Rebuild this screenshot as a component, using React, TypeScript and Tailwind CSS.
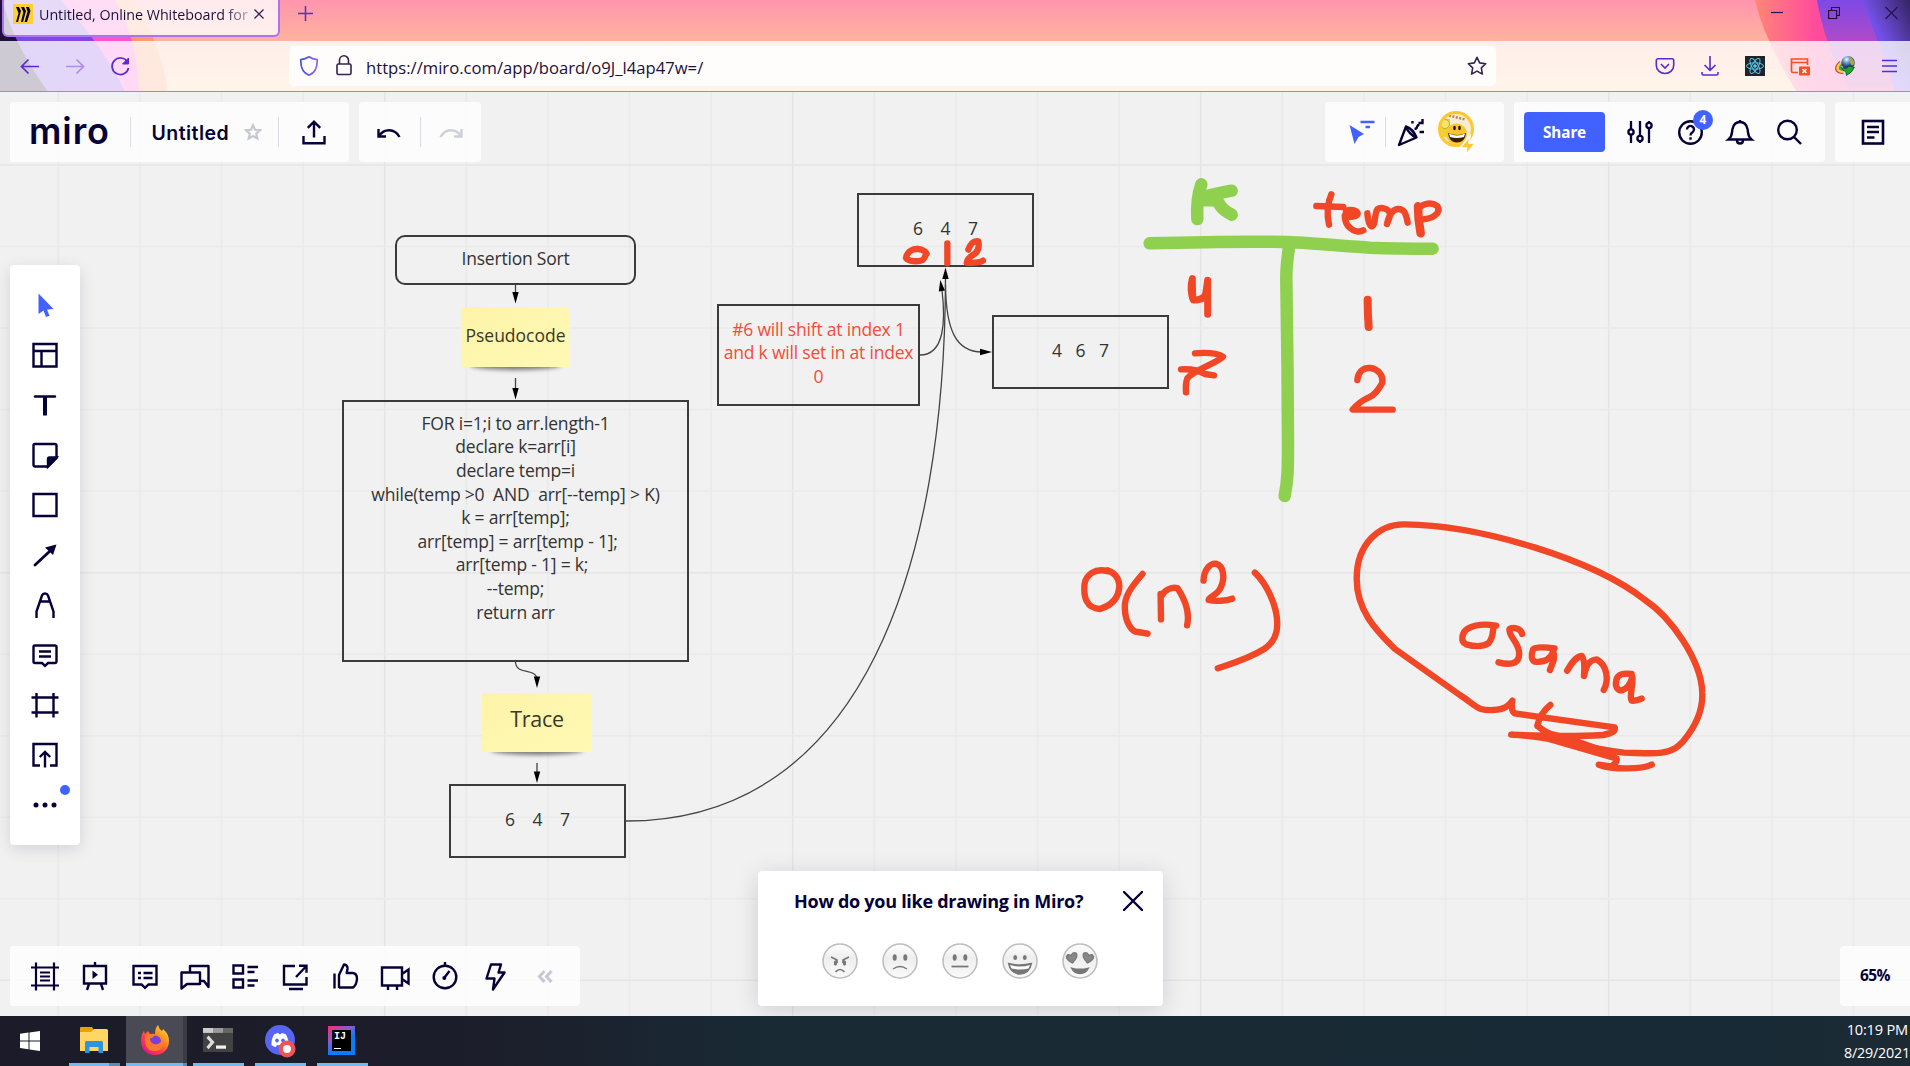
import type { ReactNode } from "react";

const NAVY = "#050038";
const RED = "#f24726";
const GREEN = "#8fd14f";

function Icon({ children, size = 30, color = NAVY, w = 2.4 }: { children: ReactNode; size?: number; color?: string; w?: number }) {
  return (
    <svg width={size} height={size} viewBox="0 0 30 30" fill="none" stroke={color} strokeWidth={w} className="block shrink-0 overflow-visible">
      {children}
    </svg>
  );
}

/* ---------- Browser chrome ---------- */

function ThemeArt() {
  return (
    <svg className="absolute inset-0" width="1910" height="92" viewBox="0 0 1910 92" preserveAspectRatio="none">
      <defs>
        <linearGradient id="sky" x1="0" y1="0" x2="0" y2="1">
          <stop offset="0" stopColor="#ff95ad" />
          <stop offset="0.45" stopColor="#ffb39f" />
          <stop offset="1" stopColor="#ffce9f" />
        </linearGradient>
        <linearGradient id="violet" x1="0" y1="0" x2="1" y2="0">
          <stop offset="0" stopColor="#7a4ae0" />
          <stop offset="1" stopColor="#8a45e4" />
        </linearGradient>
        <linearGradient id="magenta" x1="0" y1="0" x2="1" y2="0">
          <stop offset="0" stopColor="#ff8577" />
          <stop offset="0.4" stopColor="#ff4b9e" />
        </linearGradient>
        <linearGradient id="corner" x1="1" y1="0" x2="0" y2="1">
          <stop offset="0" stopColor="#33245f" />
          <stop offset="0.5" stopColor="#7350e8" />
          <stop offset="1" stopColor="#8650ff" />
        </linearGradient>
        <linearGradient id="purple" x1="0" y1="0" x2="0" y2="1">
          <stop offset="0" stopColor="#7d49e6" />
          <stop offset="0.45" stopColor="#b04ac8" />
          <stop offset="1" stopColor="#d84ba8" />
        </linearGradient>
      </defs>
      <rect width="1910" height="92" fill="url(#sky)" />
      <path d="M0 0H133Q160 40 168 92H0Z" fill="#ff9a6c" />
      <path d="M0 0H115Q138 40 139 92H0Z" fill="#ff53cf" />
      <path d="M0 0H60Q104 46 125 92H0Z" fill="url(#violet)" />
      <path d="M0 0H3Q10 38 48 92H0Z" fill="#1e1038" />
      <path d="M1755 0Q1764 40 1797 92H1910V0Z" fill="url(#magenta)" />
      <path d="M1817 0Q1824 44 1850 92H1910V0Z" fill="url(#purple)" />
      <path d="M1862 0Q1878 40 1896 92H1910V0Z" fill="url(#corner)" />
    </svg>
  );
}

function Browser() {
  return (
    <header className="relative h-[92px] shrink-0 overflow-hidden font-['Open_Sans',sans-serif]">
      <ThemeArt />
      <div className="relative flex h-[41px] items-start">
        <div className="ml-[2px] flex h-[37px] w-[278px] items-start rounded-b-[6px] border-2 border-t-0 border-[#b072f2] bg-white/80 pl-[9px] pt-[4px]">
          <svg width="20" height="20" viewBox="0 0 20 20" className="shrink-0">
            <rect width="20" height="20" fill="#ffd02f" />
            <path d="M3 3h3l2 4-3 11H3l2.500-9ZM8 3h3l2 4-3 11H8l2.300-10ZM13 3h3l1.500 4-3.500 11h-2.500l3-10.500Z" fill={NAVY} />
          </svg>
          <div className="ml-[6px] h-[22px] w-[212px] whitespace-nowrap bg-[linear-gradient(90deg,#1d1038_183px,#1d103840_212px)] bg-clip-text text-[14.3px] leading-[21px] tracking-[-0.04px] text-transparent">
            Untitled, Online Whiteboard for
          </div>
          <svg width="10" height="10" viewBox="0 0 10 10" className="ml-[3px] mt-[5px]" stroke="#33204d" strokeWidth="1.300">
            <path d="M0.500 0.500L9.500 9.500M9.500 0.500L0.500 9.500" />
          </svg>
        </div>
        <svg width="15" height="15" viewBox="0 0 15 15" className="ml-[18px] mt-[6px]" stroke="#5b2bcf" strokeWidth="1.500">
          <path d="M7.500 0V15M0 7.500H15" />
        </svg>
        <div className="ml-auto mr-[12px] mt-[6px] flex items-center gap-[45px]">
          <svg width="12" height="14" viewBox="0 0 12 14" stroke="#26124e" strokeWidth="1.200"><path d="M0 6.500H12" /></svg>
          <svg width="12" height="14" viewBox="0 0 12 14" fill="none" stroke="#1d0d3d" strokeWidth="1.200"><path d="M0.600 4.500h8v8h-8ZM3.500 4.500v-3h8v8h-3" /></svg>
          <svg width="13" height="14" viewBox="0 0 13 14" stroke="#26124e" strokeWidth="1.200"><path d="M0.500 1l12 12M12.500 1l-12 12" /></svg>
        </div>
      </div>
      <div className="relative flex h-[51px] items-center border-b border-[#b98c83] bg-white/[0.78] pb-px">
        <div className="ml-[15px] flex items-center gap-[15px]">
          <Icon color="#5b2bcf" w={1.700}><path d="M24 15.500H7M13.500 8.500L6.500 15.500l7 7" /></Icon>
          <Icon color="#b08ee8" w={1.700}><path d="M6 15.500h17M16.500 8.500l7 7-7 7" /></Icon>
          <Icon color="#5b2bcf" w={1.700}><path d="M22.500 11A8.300 8.300 0 1 0 23.500 17" /><path d="M23.500 7v6h-6Z" fill="#5b2bcf" strokeWidth="1" /></Icon>
        </div>
        <div className="ml-[154px] flex h-[40px] w-[1207px] items-center rounded-[5px] bg-white/85 pl-[10px]">
          <svg width="20" height="20" viewBox="0 0 20 20" fill="none">
            <defs><linearGradient id="sh"><stop stopColor="#3c54d8" /><stop offset="1" stopColor="#8f62e8" /></linearGradient></defs>
            <path d="M10 .8C7.500 2.500 4.800 3.300 1.800 3.700C1.500 11 4.500 17 10 19.200C15.500 17 18.500 11 18.200 3.700C15.200 3.300 12.500 2.500 10 .8Z" stroke="url(#sh)" strokeWidth="1.700" />
          </svg>
          <svg width="16" height="21" viewBox="0 0 16 21" fill="none" stroke="#33224c" strokeWidth="1.600" className="ml-[17px]">
            <rect x="1" y="9" width="14" height="10.500" rx="1.500" /><path d="M3.500 9V5.300a4.500 4.500 0 0 1 9 0V9" />
          </svg>
          <span className="ml-[14px] translate-y-[3px] whitespace-nowrap text-[16.65px] text-[#1d1038]">https://miro.com/app/board/o9J_l4ap47w=/</span>
          <svg width="22" height="22" viewBox="0 0 24 24" fill="none" stroke="#33224c" strokeWidth="1.700" strokeLinejoin="round" className="ml-auto mr-[8px]">
            <path d="M12 2.500l2.900 6.100 6.600.9-4.800 4.600 1.200 6.700L12 17.600l-5.900 3.200 1.200-6.700L2.500 9.500l6.600-.9Z" />
          </svg>
        </div>
        <div className="ml-auto mr-[8px] flex items-center gap-[21px]">
          <svg width="24" height="24" viewBox="0 0 24 24" fill="none" stroke="#5b2bcf" strokeWidth="1.600"><path d="M5 4.800h14a1.700 1.700 0 0 1 1.700 1.700v5a8.700 8 0 0 1-17.400 0v-5A1.700 1.700 0 0 1 5 4.800ZM8 10l4 4 4-4" /></svg>
          <svg width="24" height="24" viewBox="0 0 24 24" fill="none" stroke="#5b2bcf" strokeWidth="1.600"><path d="M12 2v14M6.500 11l5.500 5.300 5.500-5.300M4 18v1.500A1.500 1.500 0 0 0 5.500 21h13a1.500 1.500 0 0 0 1.500-1.500V18" /></svg>
          <svg width="24" height="24" viewBox="0 0 24 24" fill="none" stroke="#53c8ea" strokeWidth="1"><rect x="2" y="2" width="20" height="20" fill="#20232a" stroke="none" /><ellipse cx="12" cy="12" rx="8.500" ry="3.200" /><ellipse cx="12" cy="12" rx="8.500" ry="3.200" transform="rotate(60 12 12)" /><ellipse cx="12" cy="12" rx="8.500" ry="3.200" transform="rotate(120 12 12)" /><circle cx="12" cy="12" r="1.300" fill="#53c8ea" /></svg>
          <svg width="24" height="24" viewBox="0 0 24 24" fill="none" stroke="#fb4e1d" strokeWidth="1.700"><path d="M10 18.500H5a1.500 1.500 0 0 1-1.500-1.500V5H19.500v6M3.500 8.500H19.500" /><rect x="11" y="12.500" width="11" height="9" rx="1" fill="#fb4e1d" stroke="none" /><path d="M14.500 15l4 4M18.500 15l-4 4" stroke="#fff" strokeWidth="1.500" /></svg>
          <svg width="24" height="24" viewBox="0 0 24 24" fill="none">
            <defs><radialGradient id="gl" cx=".4" cy=".25"><stop stopColor="#f2f8fd" /><stop offset=".5" stopColor="#6d9ccc" /><stop offset="1" stopColor="#24457b" /></radialGradient></defs>
            <path d="M7 7.500Q1 12 3.500 17q3 3 7 2" stroke="#d8422c" strokeWidth="1.400" />
            <path d="M8 9Q3.500 12.500 5 16q2 2 6 1.500" stroke="#f6d13c" strokeWidth="2.400" />
            <path d="M9 10.500Q6 13 7 15q2 1.500 5 0" stroke="#3aa655" strokeWidth="1.800" />
            <circle cx="15" cy="8.800" r="6.800" fill="url(#gl)" />
            <path d="M17 3q4 2 4.500 6-1.500 4-3.500 1.500t-1-7.500Z" fill="#a9a548" />
            <path d="M8 13.500q4 2 7 0l-.5-1.500 7 1.200q-2 5-8 8.300l-.8-4q-3-.500-4.700-4Z" fill="#1ea52e" stroke="#0b3d18" strokeWidth=".7" />
          </svg>
          <svg width="24" height="24" viewBox="0 0 24 24" stroke="#5b2bcf" strokeWidth="1.600"><path d="M4 6.500h15M4 12h15M4 17.500h15" /></svg>
        </div>
      </div>
    </header>
  );
}

/* ---------- Board ---------- */

function Box({ x, y, w, h, rounded, children }: { x: number; y: number; w: number; h: number; rounded?: boolean; children: ReactNode }) {
  return (
    <div
      className={
        "absolute flex items-center justify-center whitespace-pre border-2 border-[#3b3b3b] text-center text-[17.5px] leading-[23.66px] tracking-[-0.2px] text-[#333] " +
        (rounded ? "rounded-[10px]" : "")
      }
      style={{ left: x, top: y, width: w, height: h }}
    >
      {children}
    </div>
  );
}

function Digits({ values, step }: { values: string[]; step: string }) {
  return (
    <div className="flex">
      {values.map((v) => (
        <span key={v} className={step}>{v}</span>
      ))}
    </div>
  );
}

function Sticky({ x, y, w, h, children }: { x: number; y: number; w: number; h: number; children: ReactNode }) {
  return (
    <div className="absolute" style={{ left: x, top: y, width: w, height: h }}>
      <div className="absolute inset-x-[10px] bottom-0 h-[8px] rounded-[50%] bg-black/10 shadow-[0_2px_4px_1px_rgba(0,0,0,0.5)]" />
      <div className="relative flex h-full items-center justify-center bg-linear-to-br from-[#fdf4a8] to-[#fff9b4] font-medium text-[#3a3827]">{children}</div>
    </div>
  );
}

function Grid() {
  const cols = Array.from({ length: 23 }, (_, i) => i);
  const rows = Array.from({ length: 11 }, (_, i) => i);
  return (
    <g strokeWidth="1.500">
      {cols.map((i) => (
        <path key={i} d={`M${58.3 + i * 81.6} 92V1016`} stroke={i % 5 === 4 ? "#e5e5e5" : "#eaeaea"} />
      ))}
      {rows.map((i) => (
        <path key={i} d={`M0 ${165 + i * 81.53}H1910`} stroke={i % 5 === 0 ? "#e5e5e5" : "#eaeaea"} />
      ))}
    </g>
  );
}

function Strokes({ paths, color, w }: { paths: string[]; color: string; w: number }) {
  return (
    <g stroke={color} strokeWidth={w} fill="none" strokeLinecap="round" strokeLinejoin="round">
      {paths.map((d) => (
        <path key={d} d={d} vectorEffect="non-scaling-stroke" />
      ))}
    </g>
  );
}

function Ink() {
  return (
    <g>
      <g transform="translate(700 180) scale(0.33333)">
        <Strokes color={RED} w={6.300} paths={[
          "M660 208C640 203 621 215 618 234C625 245 655 246 668 240C675 235 675 226 680 221C672 208 655 205 645 208",
          "M742 190V250",
          "M805 209C812 190 822 181 835 184C838 200 835 212 826 220C812 230 800 237 800 248C815 249 838 249 849 242",
        ]} />
      </g>
      <g transform="translate(1130 160) scale(0.33333)">
        <Strokes color={GREEN} w={12.500} paths={[
          "M59 250C200 246 380 244 470 246C560 250 640 258 720 263C800 266 860 266 908 266",
          "M477 262C472 300 468 320 469 360C471 500 474 700 474 850C474 920 474 960 464 1008",
          "M214 73C203 105 200 140 202 177",
          "M305 92C275 98 245 102 230 110L222 120C250 122 260 118 268 132C278 152 295 158 305 164",
        ]} />
        <Strokes color={RED} w={7} paths={[
          "M187 356C181 380 183 402 190 420C215 420 228 412 228 395L233 361M233 361V463",
          "M187 365L188 412",
        ]} />
        <Strokes color={RED} w={8} paths={["M713 419C713 450 714 475 716 501"]} />
        <Strokes color={RED} w={6.400} paths={[
          "M604 103C592 130 590 162 597 194",
          "M559 138L640 141",
          "M650 170C665 172 682 170 683 160C680 150 660 148 648 152L648 165L672 160C655 158 640 160 645 175C648 200 668 212 680 214C690 216 695 214 700 211",
          "M712 160C714 180 718 200 727 199C737 195 733 160 742 148C752 140 775 145 780 160C780 180 772 185 771 192C776 170 785 150 802 147C822 145 828 160 833 188",
          "M195 580C230 577 262 580 279 590C270 605 190 630 172 655C166 670 167 680 168 697",
          "M153 628C185 626 205 630 225 642L252 646",
          "M682 660C684 635 700 622 722 624C745 628 760 645 757 668C745 690 735 705 715 713C695 722 680 735 668 749L788 749",
        ]} />
        <Strokes color={RED} w={8.500} paths={["M864 139C864 170 866 190 872 220"]} />
        <Strokes color={RED} w={6.400} paths={["M866 145C880 130 905 125 922 138C936 160 905 177 878 178"]} />
      </g>
      <g transform="translate(1060 500) scale(0.42088 0.33333)">
        <Strokes color={RED} w={6.400} paths={[
          "M113 214C85 202 60 225 58 255C56 290 62 325 95 327C125 315 140 290 141 258C140 230 125 215 113 211",
          "M196 222C170 260 152 290 154 325C155 365 170 398 186 396L208 401",
          "M239 282L240 358M241 288C248 270 265 260 279 264C290 285 310 330 302 376",
          "M341 242C342 210 355 190 370 191C390 198 392 235 382 262C375 285 352 292 353 300C370 305 395 302 409 296",
          "M463 218C490 250 518 320 516 375C516 405 505 430 485 447C450 475 410 490 375 505",
          "M1036 377C1010 371 985 375 970 385C955 395 950 425 965 433C985 440 1005 440 1018 430C1030 412 1028 395 1030 380",
          "M1098 402C1095 385 1078 380 1068 387C1065 410 1090 425 1091 460C1092 495 1065 495 1042 487",
          "M1175 445C1150 441 1130 440 1124 448C1119 465 1120 480 1128 485C1150 488 1165 478 1172 455C1178 475 1170 490 1164 510",
          "M1205 512C1215 490 1225 470 1240 468C1248 480 1246 510 1245 528C1250 500 1255 480 1275 478C1300 495 1305 540 1292 570",
          "M1358 522C1340 520 1325 520 1322 540C1318 560 1325 572 1335 571C1350 565 1357 545 1360 530C1362 560 1352 590 1358 602C1365 603 1375 600 1382 596",
          "M1165 615C1150 630 1138 655 1134 678C1180 725 1260 745 1340 758C1380 759 1410 762 1430 758C1460 752 1470 738 1480 725C1510 680 1528 630 1526 578C1524 480 1450 350 1390 300C1270 180 1000 75 818 73C760 72 705 130 705 235C704 330 750 390 796 447L950 585C975 605 985 620 1000 627C1015 632 1045 632 1058 622C1065 616 1070 612 1075 602C1072 620 1072 632 1080 640L1318 682C1320 695 1310 700 1290 705C1220 710 1140 708 1072 704C1120 708 1150 712 1170 720L1322 775C1325 785 1315 797 1308 799L1280 794C1310 808 1380 810 1406 794",
          "M1160 700L1210 716L1300 757",
        ]} />
      </g>
    </g>
  );
}

function Connectors() {
  return (
    <g stroke="#444" strokeWidth="1.300" fill="none">
      <path d="M515.500 285v12M515.500 378v14M515.500 662C516 676 537 667 537 680M537 763v12" />
      <path d="M626 821C866 821 945 560 945.500 278" />
      <path d="M920 355C945 355 945.500 320 942 290" />
      <path d="M945.500 285C946 330 956 352 982 352" />
      <g fill="#000" stroke="none">
        <path d="M512.300 292h6.400l-3.200 11.500ZM512.300 388h6.400l-3.200 11.500ZM533.800 676.500h6.400l-3.200 11.500ZM533.800 771.500h6.400l-3.200 11.500Z" />
        <path d="M942.300 279h6.400l-3.200-11.500ZM938.800 291.500l6.200-1-4.700-10.500ZM980 348.800v6.400l12-3.200Z" />
      </g>
    </g>
  );
}

function Board() {
  return (
    <div className="absolute left-0 top-[-92px] h-[1108px] w-[1910px] font-['Open_Sans',sans-serif]">
      <svg className="absolute inset-0" width="1910" height="1108" viewBox="0 0 1910 1108">
        <Grid />
        <Connectors />
      </svg>
      <Box x={395} y={235} w={241} h={50} rounded><span className="-translate-y-px">Insertion Sort</span></Box>
      <Sticky x={461} y={307} w={109} h={60}>
        <span className="-translate-y-[2px] text-[17.5px]">Pseudocode</span>
      </Sticky>
      <Box x={342} y={400} w={347} h={262}>
        <div className="-mt-[26px]">
          {["FOR i=1;i to arr.length-1", "declare k=arr[i]", "declare temp=i", "while(temp >0  AND  arr[--temp] > K)", "k = arr[temp];", " arr[temp] = arr[temp - 1];", "   arr[temp - 1] = k;", "--temp;", "return arr"].map((l) => (
            <div key={l}>{l}</div>
          ))}
        </div>
      </Box>
      <Sticky x={482} y={693} w={110} h={59}>
        <span className="-translate-y-[3px] text-[21.5px] tracking-[-0.3px]">Trace</span>
      </Sticky>
      <Box x={449} y={784} w={177} h={74}><Digits values={["6", "4", "7"]} step="w-[27.500px] -translate-y-px" /></Box>
      <Box x={857} y={193} w={177} h={74}><Digits values={["6", "4", "7"]} step="w-[27.500px] -translate-y-px" /></Box>
      <Box x={717} y={304} w={203} h={102}>
        <div className="-mt-[4px] text-[#f24d3a]">{"#6 will shift at index 1\nand k will set in at index\n0"}</div>
      </Box>
      <Box x={992} y={315} w={177} h={74}><Digits values={["4", "6", "7"]} step="w-[23.500px] -translate-y-px" /></Box>
      <svg className="absolute inset-0" width="1910" height="1108" viewBox="0 0 1910 1108">
        <Ink />
      </svg>
    </div>
  );
}

/* ---------- Miro panels ---------- */

function Divider() {
  return <div className="h-[30px] w-px bg-[#dcdce2]" />;
}

function TopBar() {
  return (
    <div className="relative flex h-[60px] text-[#050038]">
      <div className="ml-[10px] flex w-[339px] items-center rounded bg-white/80">
        <span className="ml-[19px] w-[81px] -translate-y-px font-['Inter',sans-serif] text-[36px] font-semibold leading-none tracking-[0.9px]">miro</span>
        <div className="ml-[20px]"><Divider /></div>
        <span className="ml-[20.500px] w-[79.500px] translate-y-[1.500px] whitespace-nowrap font-['Inter',sans-serif] text-[19.5px] font-semibold tracking-[0.45px]">Untitled</span>
        <svg width="18" height="18" viewBox="0 0 24 24" fill="none" stroke="#c8c8d2" strokeWidth="3" className="ml-[13px]"><path d="M12 3l2.700 6 6.500.7-4.900 4.400 1.400 6.500L12 17.300l-5.700 3.300 1.400-6.500L2.800 9.700l6.500-.7Z" /></svg>
        <div className="ml-[16px]"><Divider /></div>
        <div className="ml-[20px]"><Icon><path d="M4.500 19v7.300h21V19M15 20.500V5M8.800 10.800L15 4.600l6.200 6.200" /></Icon></div>
      </div>
      <div className="ml-[10px] flex w-[122px] items-center rounded bg-white/80 pl-[15px]">
        <Icon><path d="M4.500 12v7.500H12M5 19C10 11.500 20.500 11 25.500 20" /></Icon>
        <div className="ml-[16px]"><Divider /></div>
        <div className="ml-[15px]"><Icon color="#cfcfd8"><path d="M25.500 12v7.500H18M25 19C20 11.500 9.500 11 4.500 20" /></Icon></div>
      </div>
      <div className="ml-auto flex w-[179px] items-center rounded bg-white/80 pl-[22px]">
        <Icon color="#4262ff"><path d="M2.500 8l5 19 4-7 5.500-3Z" fill="#4262ff" stroke="none" /><path d="M13.500 5h14M18.500 10h4.500" /></Icon>
        <div className="ml-[8px]"><Divider /></div>
        <div className="ml-[9px]">
          <Icon><path d="M4 28L11 9.500Q18 12 21.500 20.500L4 28ZM11 10Q14 17 21 20.500" strokeLinejoin="round" /><path d="M17.500 4v2.500M19.500 12c4 0 1-4 5-4.500M27.500 2v4h-4M24.500 15h4.500" /></Icon>
        </div>
        <div className="relative -mt-[6px] ml-[13px] size-[36px]">
          <svg width="44" height="46" viewBox="0 0 44 46" className="absolute left-0 top-0">
            <defs><clipPath id="av"><circle cx="18" cy="18" r="15" /></clipPath></defs>
            <circle cx="18" cy="18" r="16.500" fill="#f5ecd2" stroke="#ffc72c" strokeWidth="3" />
            <g clipPath="url(#av)">
              <path d="M0 8h12v18H0Z" fill="#e8d437" /><circle cx="7" cy="13" r="4.500" fill="#f4e66a" stroke="#c8a91c" />
              <path d="M11 4.500l16 4" stroke="#b9854c" strokeWidth="2.500" strokeDasharray="2 1.500" fill="none" />
              <circle cx="18.500" cy="23" r="10.500" fill="#fbc52d" />
              <path d="M10 22q9 4 18 0q-1 9.500-9 9.500T10 22Z" fill="#401d09" /><path d="M11 22.500q8 4 16 0l-1 3.500q-7 2-14 0Z" fill="#fff" />
              <ellipse cx="16.500" cy="17" rx="1.300" ry="2.300" fill="#1d1206" /><ellipse cx="21.500" cy="17" rx="1.300" ry="2.300" fill="#1d1206" />
            </g>
            <path d="M32 25l-10 12h6.500l-1 7 10-12h-6.500l1-7Z" fill="#ffc72c" stroke="#fff" strokeWidth="1.600" />
          </svg>
        </div>
      </div>
      <div className="ml-[10px] flex w-[311px] items-center rounded bg-white/80 pl-[10px]">
        <button className="h-[40px] w-[81px] rounded bg-[#4262ff] font-['Noto_Sans',sans-serif] text-[15.3px] font-bold text-white">Share</button>
        <div className="ml-[20px]">
          <Icon w={2.300}><path d="M6 4v8M6 18v8M15 4v14M15 25v1M24 4v1M24 12v14" /><circle cx="6" cy="15" r="2.600" /><circle cx="15" cy="21.500" r="2.600" /><circle cx="24" cy="8.500" r="2.600" /></Icon>
        </div>
        <div className="relative ml-[20px]">
          <Icon><circle cx="15.500" cy="15.500" r="11.300" /><path d="M12 12.500a3.500 3.500 0 1 1 5.500 2.800q-2 1.200-2 3.200M15.500 20.300v2.500" /></Icon>
          <span className="absolute left-[18px] top-[-7px] flex size-[20px] items-center justify-center rounded-full bg-[#4262ff] font-['Noto_Sans',sans-serif] text-[12px] font-bold text-white">4</span>
        </div>
        <div className="ml-[20px]"><Icon><path d="M3.500 22.500h23c-4-3-3-6-4-10.500C21.500 7 19 5 15 5S8.500 7 7.500 12c-1 4.500 0 7.500-4 10.500ZM12 23.500q0 3 3 3t3-3M15 5V3" /></Icon></div>
        <div className="ml-[19px]"><Icon><circle cx="13.500" cy="13" r="9.300" /><path d="M20 20l7 7" /></Icon></div>
      </div>
      <div className="ml-[10px] flex w-[75px] items-center rounded-l bg-white/80 pl-[23px]">
        <Icon w={2.600}><rect x="5" y="4" width="20" height="22.500" /><path d="M9 10h12M9 15h12M9 20.500h7.500" /></Icon>
      </div>
    </div>
  );
}

const sideTools: ReactNode[] = [
  <Icon key="select" color="#4262ff"><path d="M8.500 3.500V24l5-3.500 2.500 6.500 3.500-1.300-2.500-6.300 6.500-.5Z" fill="#4262ff" stroke="none" /></Icon>,
  <Icon key="templates"><path d="M3.500 4h23v22.500h-23ZM3.500 11h23M11.500 11v15.500" /></Icon>,
  <Icon key="text"><path d="M5 6.500h20" strokeLinecap="round" /><path d="M15 6.500V25.500" strokeWidth="4" /></Icon>,
  <Icon key="sticky"><path d="M5 4h20a1.500 1.500 0 0 1 1.500 1.500V18l-8.500 8.500H5A1.500 1.500 0 0 1 3.500 25V5.500A1.500 1.500 0 0 1 5 4Z" /><path d="M18 26.500V19a1.500 1.500 0 0 1 1.500-1.500h7Z" fill={NAVY} /></Icon>,
  <Icon key="shape"><path d="M3.500 4h23v22h-23Z" /></Icon>,
  <Icon key="line"><path d="M5 25L20 11" strokeLinecap="round" strokeWidth="2.800" /><path d="M26.500 4.500l-3.500 10.500-8-7.500Z" fill={NAVY} stroke="none" /></Icon>,
  <Icon key="pen"><path d="M6.500 28v-6.500L12 5.500q.8-2 3-2t3 2l5.500 16V28M10.500 11.500h9" /></Icon>,
  <Icon key="comment"><path d="M5 5.500h20a1.500 1.500 0 0 1 1.500 1.500v14.500a1.500 1.500 0 0 1-1.500 1.500h-7l-3 2.800-3-2.800H5a1.500 1.500 0 0 1-1.500-1.500V7A1.500 1.500 0 0 1 5 5.500ZM9 11.500h12M9 16.500h12" /></Icon>,
  <Icon key="frame"><path d="M6.500 3v24.500M23.500 3v24.500M1.500 7.500h27M1.500 22.500h27" /></Icon>,
  <Icon key="upload"><path d="M10 25.500H3.500V4h23V25.500H20M15 27.500V12.500M9.800 17l5.200-5 5.200 5" /></Icon>,
  <Icon key="more"><g fill={NAVY} stroke="none"><circle cx="6" cy="15" r="2.500" /><circle cx="15" cy="15" r="2.500" /><circle cx="24" cy="15" r="2.500" /></g></Icon>,
];

function SideBar() {
  return (
    <div className="relative ml-[10px] mt-[103px] flex h-[580px] w-[70px] flex-col items-center rounded bg-white pt-[15px] shadow-[0_4px_16px_rgba(5,0,56,0.12)]">
      {sideTools.map((t, i) => (
        <div key={i} className="flex h-[50px] items-center">{t}</div>
      ))}
      <span className="absolute left-[50px] top-[520px] size-[10px] rounded-full bg-[#4262ff]" />
    </div>
  );
}

const bottomTools: ReactNode[] = [
  <Icon key="frames"><path d="M6 1.500v28M24 1.500v28M1 6.500h28M1 24.500h28M10 11.500h10M10 15.500h10M10 19.500h10" strokeWidth="2.200" /></Icon>,
  <Icon key="present"><path d="M4 5h22v17.500h-22ZM15 1v4M9 23l-2 6M21 23l2 6" /><path d="M12.500 9.500v8.500l5.500-4.200Z" fill={NAVY} stroke="none" /></Icon>,
  <Icon key="notes"><path d="M3.500 5h23v18.500h-8l-3.500 3.300-3.500-3.300h-8ZM8 12h3M13.500 12h9M8 17h3M13.500 17h9" /></Icon>,
  <Icon key="chat"><path d="M10 10.500V5h18.500v21l-4.500-6h-3M1.500 27.500V11.500h18.500v11.500H7Z" strokeLinejoin="round" /></Icon>,
  <Icon key="cards"><path d="M3.500 4.500h9.500v8H3.500ZM3.500 18.500h9.500v8H3.500ZM17.500 6h10.500M17.500 11h7M17.500 19.500h10.500M17.500 24.500h7" /></Icon>,
  <Icon key="share-screen"><path d="M15 5H4v18.500h22.500V16M9 28h14M16 16L25.500 6M19 4.800h7.500v7" /></Icon>,
  <Icon key="vote"><path d="M4.500 12.500V27.500M9 27V14l5-10.500q4 .5 3.500 4.500l-.8 4H23q4 .5 4 6-.5 6-4 8.500H9" strokeLinejoin="round" /></Icon>,
  <Icon key="video"><path d="M2 6.500h20v18H2ZM22 13l6.500-4.500v14L22 18M8 25v4M17 25v4" /></Icon>,
  <Icon key="timer"><circle cx="15" cy="16" r="11.300" /><path d="M15 4.500V1M14.500 16.500l5-6.500" /><circle cx="14.300" cy="17" r="2" fill={NAVY} stroke="none" /></Icon>,
  <Icon key="apps"><path d="M11 3.500h10l-2.500 8h6L13 28.500l1.500-11H6.500Z" strokeLinejoin="round" /></Icon>,
  <Icon key="collapse" color="#c8c8d4" w={3}><path d="M14.500 10l-5 5.500 5 5.500M21.500 10l-5 5.500 5 5.500" /></Icon>,
];

function Face({ kind }: { kind: number }) {
  return (
    <svg width="36" height="36" viewBox="0 0 36 36" fill="none" stroke="#777" strokeWidth="1.300">
      <defs><linearGradient id={`face${kind}`} x2="0" y2="1"><stop stopColor="#fff" /><stop offset=".4" stopColor="#eee" /><stop offset="1" stopColor="#fafafa" /></linearGradient></defs>
      <circle cx="18" cy="18" r="17" fill={`url(#face${kind})`} stroke="#bdbdbd" strokeWidth="1.500" />
      {kind === 0 && <><path d="M9 14l6 3v3M27 14l-6 3v3M13.500 29q4.500-5 9 0" strokeWidth="1.700" /><g fill="#777" stroke="none"><ellipse cx="13.500" cy="20" rx="1.700" ry="2.700" /><ellipse cx="22.500" cy="20" rx="1.700" ry="2.700" /></g></>}
      {(kind === 1 || kind === 2) && <><g fill="#777" stroke="none"><ellipse cx="12.700" cy="14.500" rx="2" ry="3.300" /><ellipse cx="23.300" cy="14.500" rx="2" ry="3.300" /></g>{kind === 1 ? <path d="M11 26q7-5 14 0" /> : <path d="M9.500 23.500h17" strokeWidth="1.800" />}</>}
      {kind === 3 && <><g fill="#777" stroke="none"><ellipse cx="13.200" cy="14.500" rx="1.900" ry="2.600" /><ellipse cx="22.800" cy="14.500" rx="1.900" ry="2.600" /></g><path d="M6.500 20.500q11.500 3 23 0q-2 10.500-11.500 10.500T6.500 20.500Z" fill="#777" /><path d="M8 22q10 3 20 0l-1.500 3.500q-8.500 2-17 0Z" fill="#fff" stroke="none" /></>}
      {kind === 4 && <><path d="M10.500 20q-6-3-6-6.500 1-3 4.500-1 2-4 5-2.500 3 3-3.500 10ZM25.500 20q6-3 6-6.500-1-3-4.500-1-2-4-5-2.500-3 3 3.500 10Z" fill="#888" /><path d="M9.500 25q8.500 2.500 17 0-2.500 5.500-8.500 5.500T9.500 25Z" fill="#777" /></>}
    </svg>
  );
}

function Survey() {
  return (
    <div className="absolute left-[758px] top-[779px] h-[135px] w-[405px] rounded bg-white shadow-[0_4px_24px_rgba(5,0,56,0.14)]">
      <div className="mt-[20px] flex items-center justify-between pl-[36px] pr-[20px]">
        <span className="whitespace-nowrap font-['Open_Sans',sans-serif] text-[18px] font-bold leading-[20px] tracking-[-0.27px] text-[#050038]">How do you like drawing in Miro?</span>
        <svg width="20" height="20" viewBox="0 0 20 20" stroke={NAVY} strokeWidth="2.400" strokeLinecap="round"><path d="M1 1l18 18M19 1L1 19" /></svg>
      </div>
      <div className="mt-[32px] flex gap-[24px] pl-[64px]">
        {[0, 1, 2, 3, 4].map((k) => <Face key={k} kind={k} />)}
      </div>
    </div>
  );
}

/* ---------- Taskbar ---------- */

function Task({ children, className }: { children: ReactNode; className: string }) {
  return <div className={"flex h-full items-center justify-center border-b-[3px] border-[#76b9ed] " + className}>{children}</div>;
}

function Taskbar() {
  return (
    <footer className="flex h-[50px] shrink-0 items-center bg-[linear-gradient(90deg,#1c1b29_0%,#1c1d2a_24%,#192a34_40%,#182a35_92%,#1d2a34_100%)] font-['Open_Sans',sans-serif]">
      <svg width="20" height="20" viewBox="0 0 20 20" className="ml-[20px] mr-[29px]" fill="#fff"><path d="M0 2.800l8.500-1.200v7.800H0ZM9.500 1.500L20 0v9.400H9.500ZM0 10.400h8.500v7.900L0 17.100ZM9.500 10.400H20V20L9.500 18.500Z" /></svg>
      <div className="flex h-full">
        <Task className="w-[40px] pl-[10px]">
          <svg width="28" height="26" viewBox="0 0 28 26" className="shrink-0"><path d="M0 1a1 1 0 0 1 1-1h11l2 3-2 4H0Z" fill="#e8a100" /><path d="M0 5h11l3-3h12.500A1.500 1.500 0 0 1 28 3.500V24H0Z" fill="#ffd563" /><path d="M5 26V15.500q0-1.500 1.500-1.500h15q1.500 0 1.500 1.500V26h-4.500v-6h-9v6Z" fill="#2f94dc" /></svg>
        </Task>
        <div className="h-full w-[11px] border-b-[3px] border-[#5a8cb5]" />
      </div>
      <div className="ml-[6px] flex h-full">
        <Task className="w-[57px] bg-[#494a54]">
          <svg width="30" height="32" viewBox="0 0 30 30">
            <defs>
              <linearGradient id="fx" x1="1" y1="0" x2=".2" y2="1"><stop stopColor="#fff44f" /><stop offset=".35" stopColor="#ff9a1f" /><stop offset=".7" stopColor="#ff3a4d" /><stop offset="1" stopColor="#e01587" /></linearGradient>
            </defs>
            <path d="M18 0q1 4 4 6 1-1 1-2 6 5 6 12c0 8-6 14-14 14S1 24 1 16Q1 9 4 6l1 3 3-3 2 3q3-.500 5 0 0-6 3-9Z" fill="url(#fx)" />
            <circle cx="15" cy="16.500" r="6" fill="#7a3fd8" />
            <path d="M5 10q5-2 9 1-1 2-4 2.500 0 5 6 6 5-1 6-5 3 6-2 10-6 3-11 0T5 10Z" fill="#ff7a28" />
          </svg>
        </Task>
        <div className="h-full w-[4px] border-b-[3px] border-[#5a8cb5] bg-[#3a3b46]" />
      </div>
      <Task className="ml-[6px] w-[51px] pr-[1px]">
        <svg width="30" height="24" viewBox="0 0 30 22" preserveAspectRatio="none"><rect width="30" height="22" rx="1" fill="#424242" /><path d="M0 0h10v4.500H0Z" fill="#ccc" /><path d="M10 0h10v4.500H10Z" fill="#9a9a9a" /><path d="M20 0h10v4.500H20Z" fill="#676767" /><path d="M4.500 8l5 5-5 5.500" fill="none" stroke="#ddd" strokeWidth="3" /><path d="M13 16h10v3H13Z" fill="#f2f2f2" /></svg>
      </Task>
      <Task className="ml-[11px] w-[51px] pr-[2px]">
        <svg width="30" height="30" viewBox="0 0 30 30" className="overflow-visible"><circle cx="15" cy="15" r="15" fill="#5865f2" /><path d="M9 9.500q2-1.500 4.500-1.500l.5 1.200h2L16.500 8q2.500 0 4.500 1.500Q24 15 23.500 20q-2 2-4.500 2l-1-2q-3 .500-6 0l-1 2q-2.500 0-4.500-2Q6 15 9 9.500Z" fill="#fff" /><ellipse cx="12" cy="15.500" rx="1.800" ry="2" fill="#5865f2" /><ellipse cx="18" cy="15.500" rx="1.800" ry="2" fill="#5865f2" /><circle cx="22" cy="24" r="8.500" fill="#ed5555" /><circle cx="22" cy="24" r="4" fill="#fff" /></svg>
      </Task>
      <Task className="ml-[11px] w-[51px] pr-[2px] pt-[2px]">
        <div className="flex h-[29px] w-[27px] items-center justify-center bg-[linear-gradient(145deg,#fb2d6c_0%,#8a5bd0_35%,#087cfa_60%)]">
          <div className="relative h-[21px] w-[19px] bg-black pl-[2px] pt-px font-['Liberation_Mono',monospace] text-[10px] font-bold leading-[11px] text-white">IJ<span className="absolute bottom-[2px] left-[2px] h-[1.500px] w-[7px] bg-white" /></div>
        </div>
      </Task>
      <div className="ml-auto flex flex-col items-end text-[14.300px] leading-[23px] tracking-[-0.2px] text-white">
        <span className="mr-[2px] text-[14.600px]">10:19 PM</span>
        <span>8/29/2021</span>
      </div>
    </footer>
  );
}

export default function App() {
  return (
    <div className="flex h-[1066px] w-[1910px] flex-col overflow-hidden">
      <Browser />
      <main className="relative flex h-[924px] flex-col overflow-hidden bg-[#f1f1f1] pt-[10px]">
        <Board />
        <TopBar />
        <SideBar />
        <div className="relative mb-[10px] mt-auto flex h-[60px] justify-between">
          <div className="ml-[10px] flex w-[570px] items-center gap-[20px] rounded bg-white/80 pl-[20px]">{bottomTools}</div>
          <div className="flex w-[70px] items-center justify-center rounded-l bg-white/80 font-['Open_Sans',sans-serif] text-[15.5px] font-bold tracking-[-0.5px] text-[#050038]">65%</div>
        </div>
        <Survey />
      </main>
      <Taskbar />
    </div>
  );
}
